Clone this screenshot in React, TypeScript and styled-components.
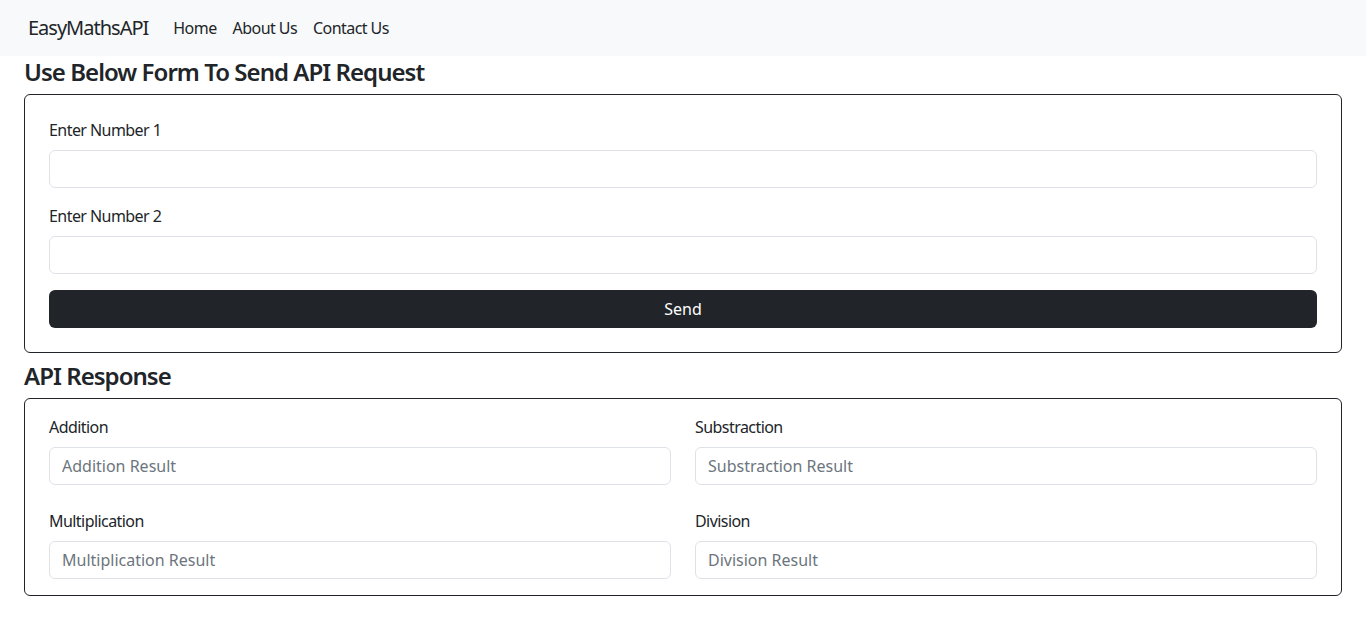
import React from "react";
import styled, { createGlobalStyle } from "styled-components";

const GlobalStyle = createGlobalStyle`
  * { box-sizing: border-box; }
  body {
    margin: 0;
    background: #fff;
    color: #212529;
    font-family: "Noto Sans", "Open Sans", Arial, sans-serif;
    font-size: 16px;
    line-height: 1.5;
    letter-spacing: -0.035em;
  }
`;

const Navbar = styled.nav`
  background: #f8f9fa;
  height: 56px;
  padding: 0 28px;
  display: flex;
  align-items: center;
`;

const Brand = styled.a`
  font-size: 20px;
  color: #212529;
  text-decoration: none;
  margin-right: 17px;
  line-height: 30px;
  letter-spacing: -0.05em;
`;

const NavList = styled.ul`
  display: flex;
  list-style: none;
  margin: 0;
  padding: 0;
`;

const NavLink = styled.a`
  display: block;
  padding: 8px;
  color: #212529;
  text-decoration: none;
  font-size: 16px;
`;

const Main = styled.main`
  padding: 1px 24px 0;
`;

const Heading = styled.h4`
  margin: 0 0 8px;
  font-size: 24px;
  font-weight: 600;
  line-height: 29px;
  letter-spacing: -0.04em;
`;

const Card = styled.section<{ $pad: string }>`
  border: 1px solid #212529;
  border-radius: 6px;
  padding: ${(p) => p.$pad};
  margin-bottom: 8px;
`;

const Field = styled.div<{ $mb?: number }>`
  margin-bottom: ${(p) => p.$mb ?? 16}px;
`;

const Label = styled.label`
  display: block;
  margin-bottom: 8px;
  line-height: 24px;
`;

const Input = styled.input`
  display: block;
  width: 100%;
  height: 38px;
  padding: 6px 12px;
  font: inherit;
  font-size: 16px;
  color: #212529;
  border: 1px solid #dee2e6;
  border-radius: 6px;
  background: #fff;
  &::placeholder { color: #6c757d; opacity: 1; }
`;

const Button = styled.button`
  display: block;
  width: 100%;
  height: 38px;
  border: none;
  border-radius: 6px;
  background: #212529;
  color: #fff;
  font: inherit;
  font-size: 16px;
`;

const Grid = styled.div`
  display: grid;
  grid-template-columns: 1fr 1fr;
  column-gap: 24px;
  row-gap: 24px;
`;

export default function App() {
  const results = [
    ["Addition", "Addition Result"],
    ["Substraction", "Substraction Result"],
    ["Multiplication", "Multiplication Result"],
    ["Division", "Division Result"],
  ];
  return (
    <>
      <GlobalStyle />
      <Navbar>
        <Brand href="#">EasyMathsAPI</Brand>
        <NavList>
          <li><NavLink href="#">Home</NavLink></li>
          <li><NavLink href="#">About Us</NavLink></li>
          <li><NavLink href="#">Contact Us</NavLink></li>
        </NavList>
      </Navbar>
      <Main>
        <Heading>Use Below Form To Send API Request</Heading>
        <Card $pad="23px 24px 24px">
          <Field>
            <Label>Enter Number 1</Label>
            <Input type="text" />
          </Field>
          <Field>
            <Label>Enter Number 2</Label>
            <Input type="text" />
          </Field>
          <Button>Send</Button>
        </Card>
        <Heading>API Response</Heading>
        <Card $pad="16px 24px 16px">
          <Grid>
            {results.map(([l, p]) => (
              <Field key={l} $mb={0}>
                <Label>{l}</Label>
                <Input type="text" placeholder={p} />
              </Field>
            ))}
          </Grid>
        </Card>
      </Main>
    </>
  );
}
